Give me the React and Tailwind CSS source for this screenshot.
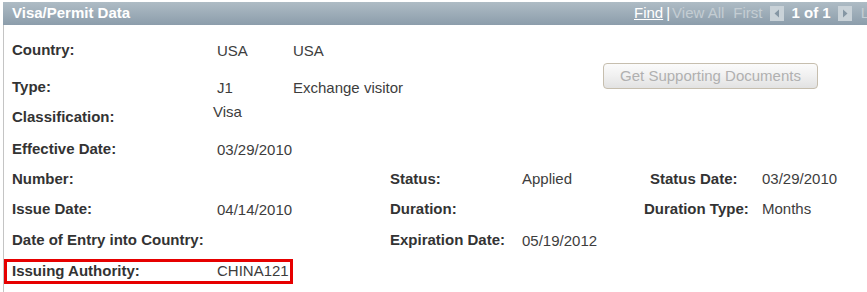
import React from 'react';

const font = { fontFamily: '"Liberation Sans", Arial, sans-serif' };

const Arrow = ({ dir }) => (
  <svg width="14" height="15" viewBox="0 0 14 15" className="shrink-0">
    <rect x="0" y="0" width="14" height="15" fill="#c9d2d8" />
    {dir === 'left' ? (
      <polygon points="9,3.5 9,11.5 4.5,7.5" fill="#8596a4" />
    ) : (
      <polygon points="5,3.5 5,11.5 9.5,7.5" fill="#8596a4" />
    )}
  </svg>
);

const Label = ({ children, className = '' }) => (
  <span className={`font-bold text-[#333] ${className}`}>{children}</span>
);

const Value = ({ children, className = '' }) => (
  <span className={`text-[#3d3d3d] ${className}`}>{children}</span>
);

const App = () => {
  return (
    <div className="w-[867px] h-[292px] bg-white overflow-hidden text-[15px]" style={font}>
      <div className="h-[2px]" />
      {/* header bar */}
      <div className="ml-[3px] h-[23px] flex items-center overflow-hidden whitespace-nowrap bg-gradient-to-b from-[#aebcc5] to-[#8c9dab]">
        <div className="w-[631px] shrink-0 pl-[9px] font-bold text-white">Visa/Permit Data</div>
        <div className="flex items-center shrink-0 text-[15px]">
          <span className="text-white underline">Find</span>
          <span className="text-white ml-[3px]">|</span>
          <span className="text-[#c4cdd3] ml-[2px]">View All</span>
          <span className="text-[#c4cdd3] ml-[9px]">First</span>
          <span className="ml-[7px]"><Arrow dir="left" /></span>
          <span className="text-white font-bold ml-[8px]">1 of 1</span>
          <span className="ml-[7px]"><Arrow dir="right" /></span>
          <span className="text-[#c4cdd3] ml-[9px]">Last</span>
        </div>
      </div>

      {/* body */}
      <div className="ml-[3px] border-l border-[#c4c4c4] h-[267px]">
        <div className="flex">
          <div className="w-[599px] pl-[8px]">
            <div className="h-[50px] flex items-center">
              <Label className="w-[205px]">Country:</Label>
              <Value className="w-[76px] mt-[3px]">USA</Value>
              <Value className="mt-[3px]">USA</Value>
            </div>
            <div className="h-[24px] flex items-center">
              <Label className="w-[205px]">Type:</Label>
              <Value className="w-[76px] mt-[2px]">J1</Value>
              <Value className="mt-[2px]">Exchange visitor</Value>
            </div>
            <div className="h-[36px] flex items-center">
              <Label className="w-[201px]">Classification:</Label>
              <Value className="mb-[9px]">Visa</Value>
            </div>
            <div className="h-[28px] flex items-center">
              <Label className="w-[205px]">Effective Date:</Label>
              <Value className="mt-[2px]">03/29/2010</Value>
            </div>
          </div>
          <div className="pt-[38px]">
            <button className="w-[215px] h-[26px] rounded-[4px] border border-[#c6beae] bg-gradient-to-b from-[#fbfbfb] via-[#f0f0f0] to-[#e2e2e2] text-[#b0b0b0] text-[15px] flex items-center justify-center">
              Get Supporting Documents
            </button>
          </div>
        </div>

        <div className="pl-[8px]">
          <div className="h-[32px] flex items-center">
            <Label className="w-[205px]">Number:</Label>
            <span className="w-[173px]" />
            <Label className="w-[132px]">Status:</Label>
            <Value className="w-[122px]">Applied</Value>
            <Label className="w-[118px] pl-[6px]">Status Date:</Label>
            <Value>03/29/2010</Value>
          </div>
          <div className="h-[28px] flex items-center">
            <Label className="w-[205px]">Issue Date:</Label>
            <Value className="w-[173px] mt-[2px]">04/14/2010</Value>
            <Label className="w-[132px]">Duration:</Label>
            <span className="w-[122px]" />
            <Label className="w-[118px]">Duration Type:</Label>
            <Value>Months</Value>
          </div>
          <div className="h-[34px] flex items-center">
            <Label className="w-[205px]">Date of Entry into Country:</Label>
            <span className="w-[173px]" />
            <Label className="w-[132px]">Expiration Date:</Label>
            <Value className="mt-[2px]">05/19/2012</Value>
          </div>
        </div>

        <div className="mt-[2px] w-[289px] h-[25px] border-[3px] border-[#e60000] pl-[5px] flex items-center">
          <Label className="w-[205px]">Issuing Authority:</Label>
          <Value>CHINA121</Value>
        </div>
      </div>
    </div>
  );
};

export default App;
